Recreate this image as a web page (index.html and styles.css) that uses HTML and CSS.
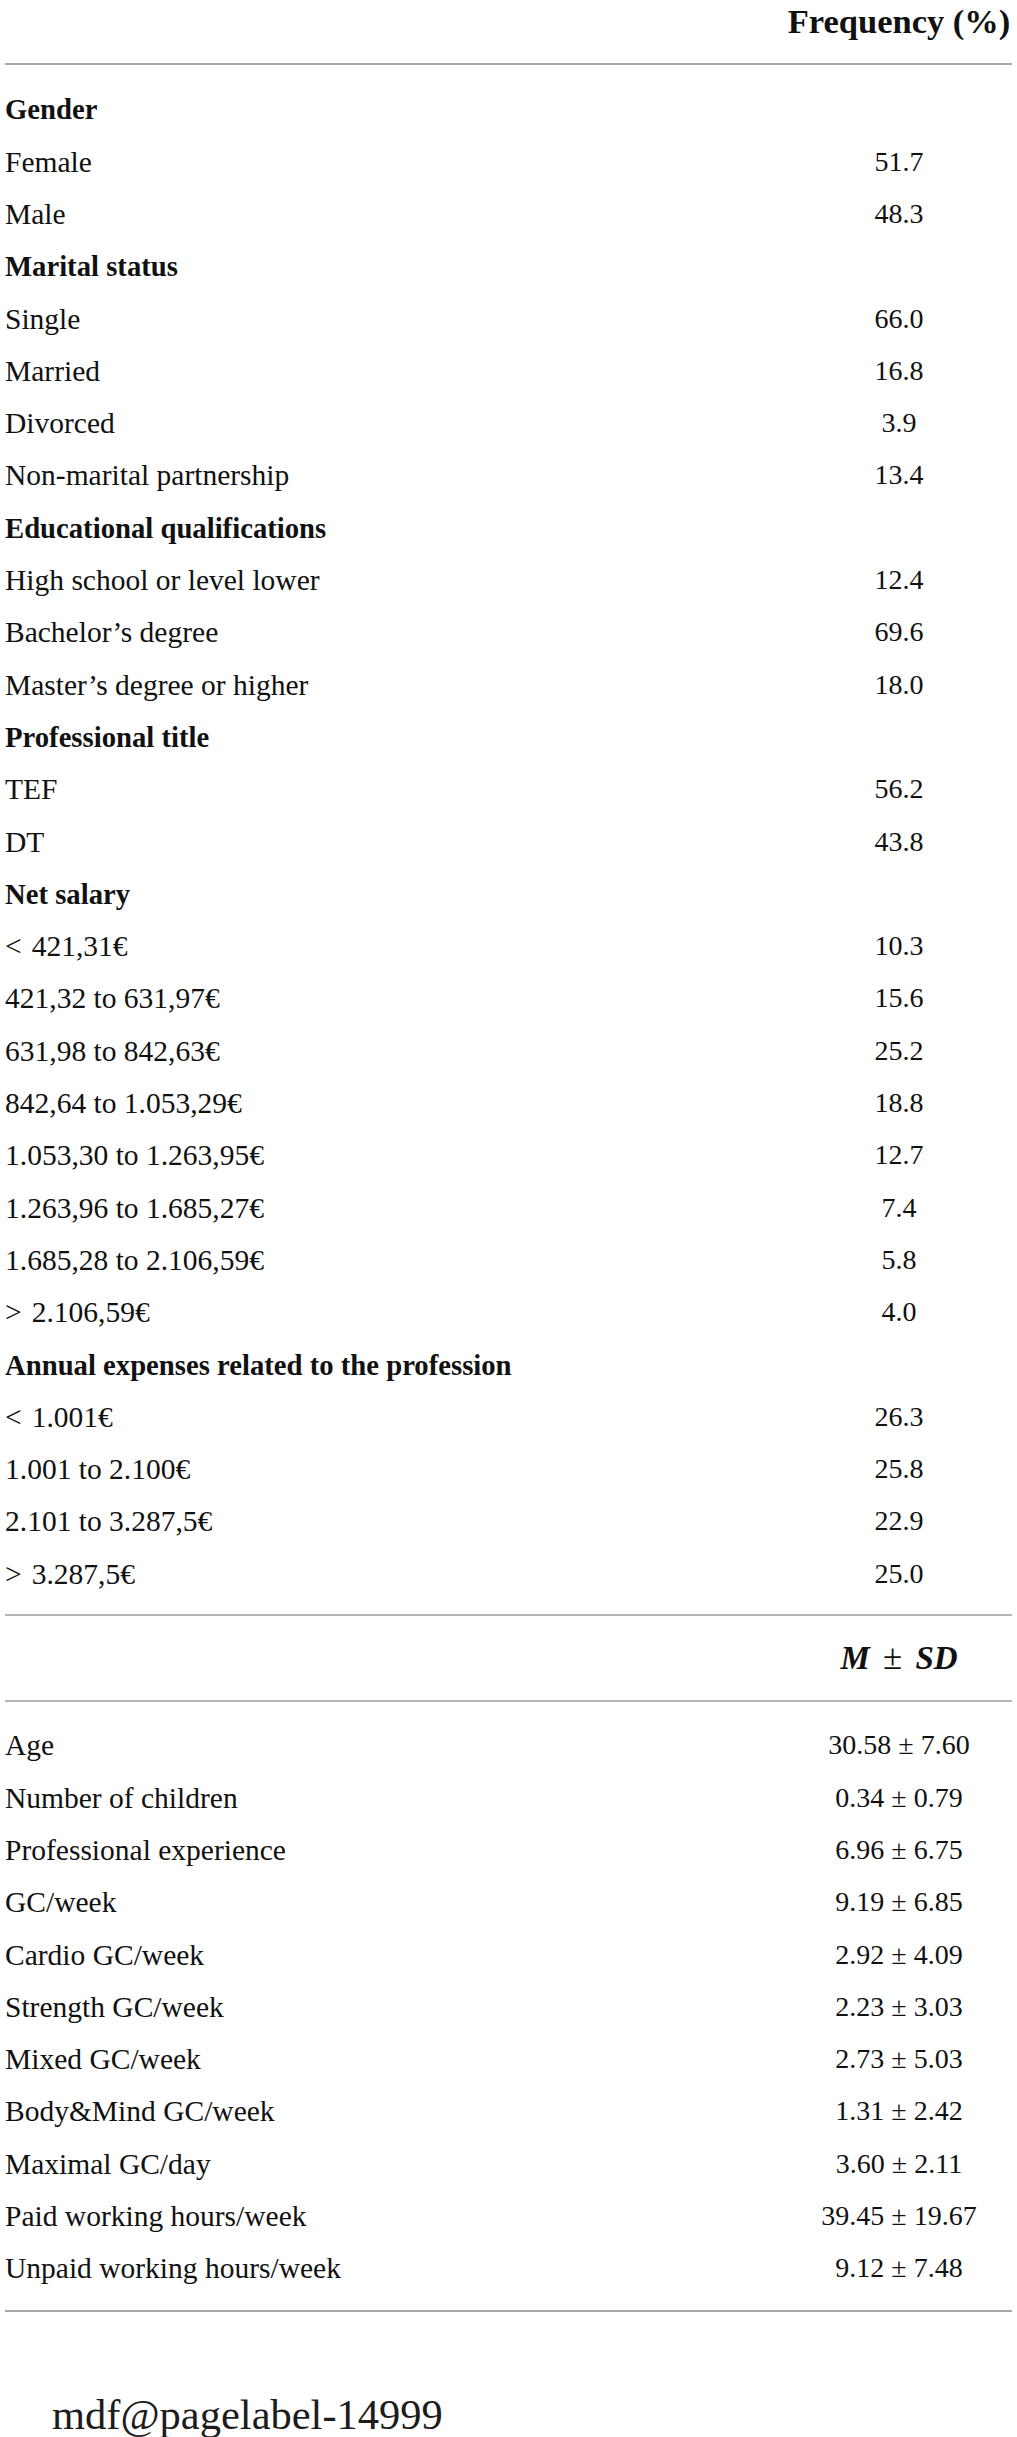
FILE: index.html
```html
<!DOCTYPE html>
<html lang="en">
<head>
<meta charset="utf-8">
<title>Table</title>
<link rel="stylesheet" href="styles.css">
</head>
<body>
<div class="table">
  <div class="row head"><span></span><span class="v">Frequency (%)</span></div>
  <div class="section first">
    <div class="row cat"><span class="k">Gender</span><span class="v"></span></div>
    <div class="row"><span class="k">Female</span><span class="v">51.7</span></div>
    <div class="row"><span class="k">Male</span><span class="v">48.3</span></div>
    <div class="row cat"><span class="k">Marital status</span><span class="v"></span></div>
    <div class="row"><span class="k">Single</span><span class="v">66.0</span></div>
    <div class="row"><span class="k">Married</span><span class="v">16.8</span></div>
    <div class="row"><span class="k">Divorced</span><span class="v">3.9</span></div>
    <div class="row"><span class="k">Non-marital partnership</span><span class="v">13.4</span></div>
    <div class="row cat"><span class="k">Educational qualifications</span><span class="v"></span></div>
    <div class="row"><span class="k">High school or level lower</span><span class="v">12.4</span></div>
    <div class="row"><span class="k">Bachelor’s degree</span><span class="v">69.6</span></div>
    <div class="row"><span class="k">Master’s degree or higher</span><span class="v">18.0</span></div>
    <div class="row cat"><span class="k">Professional title</span><span class="v"></span></div>
    <div class="row"><span class="k">TEF</span><span class="v">56.2</span></div>
    <div class="row"><span class="k">DT</span><span class="v">43.8</span></div>
    <div class="row cat"><span class="k">Net salary</span><span class="v"></span></div>
    <div class="row"><span class="k"><span class="op">&lt;</span>421,31€</span><span class="v">10.3</span></div>
    <div class="row"><span class="k">421,32 to 631,97€</span><span class="v">15.6</span></div>
    <div class="row"><span class="k">631,98 to 842,63€</span><span class="v">25.2</span></div>
    <div class="row"><span class="k">842,64 to 1.053,29€</span><span class="v">18.8</span></div>
    <div class="row"><span class="k">1.053,30 to 1.263,95€</span><span class="v">12.7</span></div>
    <div class="row"><span class="k">1.263,96 to 1.685,27€</span><span class="v">7.4</span></div>
    <div class="row"><span class="k">1.685,28 to 2.106,59€</span><span class="v">5.8</span></div>
    <div class="row"><span class="k"><span class="op">&gt;</span>2.106,59€</span><span class="v">4.0</span></div>
    <div class="row cat"><span class="k">Annual expenses related to the profession</span><span class="v"></span></div>
    <div class="row"><span class="k"><span class="op">&lt;</span>1.001€</span><span class="v">26.3</span></div>
    <div class="row"><span class="k">1.001 to 2.100€</span><span class="v">25.8</span></div>
    <div class="row"><span class="k">2.101 to 3.287,5€</span><span class="v">22.9</span></div>
    <div class="row"><span class="k"><span class="op">&gt;</span>3.287,5€</span><span class="v">25.0</span></div>
  </div>
  <div class="section mid">
    <div class="row msd"><span></span><span class="v"><i>M</i> <span class="pm">±</span> <i>SD</i></span></div>
  </div>
  <div class="section last">
    <div class="row"><span class="k">Age</span><span class="v">30.58 ± 7.60</span></div>
    <div class="row"><span class="k">Number of children</span><span class="v">0.34 ± 0.79</span></div>
    <div class="row"><span class="k">Professional experience</span><span class="v">6.96 ± 6.75</span></div>
    <div class="row"><span class="k">GC/week</span><span class="v">9.19 ± 6.85</span></div>
    <div class="row"><span class="k">Cardio GC/week</span><span class="v">2.92 ± 4.09</span></div>
    <div class="row"><span class="k">Strength GC/week</span><span class="v">2.23 ± 3.03</span></div>
    <div class="row"><span class="k">Mixed GC/week</span><span class="v">2.73 ± 5.03</span></div>
    <div class="row"><span class="k">Body&amp;Mind GC/week</span><span class="v">1.31 ± 2.42</span></div>
    <div class="row"><span class="k">Maximal GC/day</span><span class="v">3.60 ± 2.11</span></div>
    <div class="row"><span class="k">Paid working hours/week</span><span class="v">39.45 ± 19.67</span></div>
    <div class="row"><span class="k">Unpaid working hours/week</span><span class="v">9.12 ± 7.48</span></div>
  </div>
</div>
<div class="label">mdf@pagelabel-14999</div>
</body>
</html>
```

FILE: styles.css
```css
html, body {
  margin: 0;
  padding: 0;
  background: #ffffff;
}

body {
  font-family: "Liberation Serif", "Times New Roman", serif;
  color: #111111;
  height: 2437px;
  overflow: hidden;
}

.table {
  margin: 0 5px;
}

.row {
  display: grid;
  grid-template-columns: 1fr 226px;
  font-size: 28px;
  line-height: 52.3px;
  white-space: nowrap;
}

.row .k {
  font-size: 29.5px;
}

.row .v {
  text-align: center;
}

.row.cat {
  font-weight: bold;
}

.row.cat .k {
  font-size: 28.7px;
}

.op {
  margin-right: 10px;
}

.row.head {
  font-size: 34.5px;
  font-weight: bold;
  line-height: 43px;
  padding-bottom: 20px;
  border-bottom: 2px solid #a8a8a8;
}

.section.first {
  padding-top: 18.4px;
  padding-bottom: 14px;
  border-bottom: 2px solid #b5b5b5;
}

.section.mid {
  padding-top: 16.4px;
  padding-bottom: 15.3px;
  border-bottom: 2px solid #b5b5b5;
}

.row.msd {
  font-size: 33px;
  font-weight: bold;
  word-spacing: 5px;
}

.row.msd i {
  font-style: italic;
}

.row.msd .pm {
  font-size: 35px;
  font-weight: normal;
}

.section.last {
  padding-top: 17.4px;
  padding-bottom: 15.3px;
  border-bottom: 2px solid #a8a8a8;
}

.label {
  margin: 78.5px 0 0 52px;
  font-family: "Liberation Serif", "Times New Roman", serif;
  font-size: 42.5px;
  line-height: 50px;
  color: #1c1c1c;
  white-space: nowrap;
}
```
